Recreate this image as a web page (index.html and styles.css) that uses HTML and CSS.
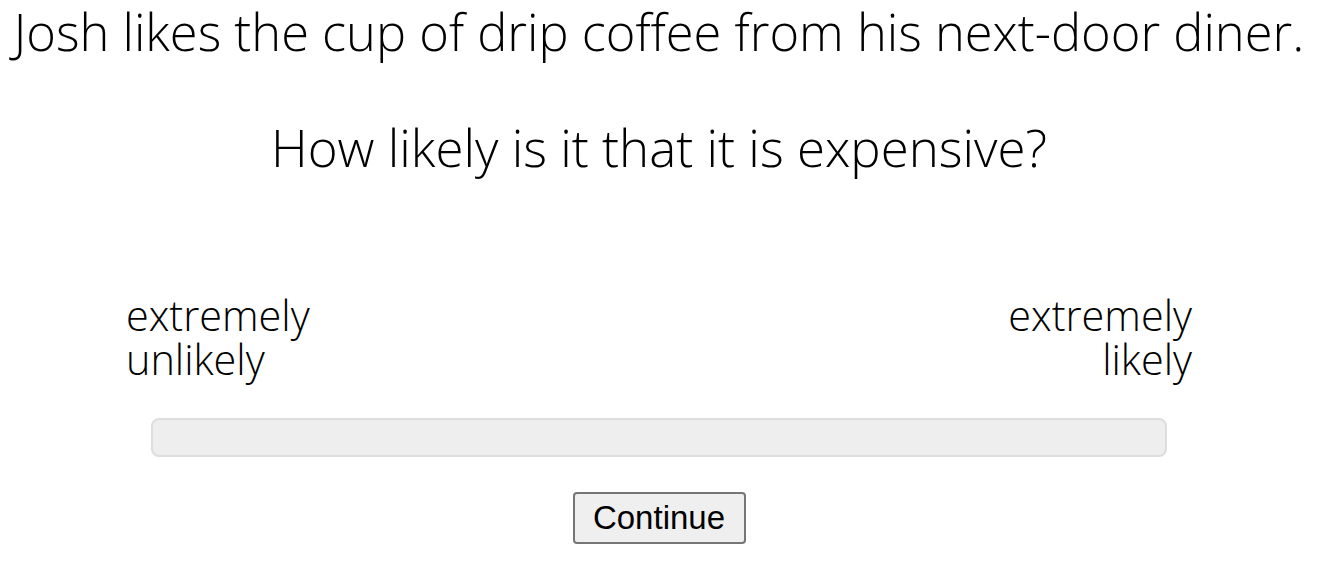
FILE: index.html
```html
<!DOCTYPE html>
<html>
<head>
<meta charset="utf-8">
<link rel="stylesheet" href="styles.css">
</head>
<body>
<div class="page">
  <p class="prompt">Josh likes the cup of drip coffee from his next-door diner.</p>
  <p class="question">How likely is it that it is expensive?</p>
  <div class="scale">
    <div class="labels">
      <div class="label left">extremely<br>unlikely</div>
      <div class="label right">extremely<br>likely</div>
    </div>
    <div class="track"></div>
  </div>
  <div class="actions">
    <button class="btn" type="button">Continue</button>
  </div>
</div>
</body>
</html>
```

FILE: styles.css
```css
html, body {
  margin: 0;
  padding: 0;
  background: #ffffff;
}
.page {
  width: 1318px;
  font-family: "Open Sans", "DejaVu Sans", sans-serif;
  font-weight: 300;
  color: #000;
  display: flex;
  flex-direction: column;
  align-items: center;
}
.prompt {
  margin: 2px 0 0 0;
  font-size: 50.6px;
  line-height: 60px;
  white-space: nowrap;
}
.question {
  margin: 55px 0 0 0;
  font-size: 51px;
  line-height: 60px;
}
.scale {
  margin-top: 116px;
  width: 1066px;
  display: flex;
  flex-direction: column;
  align-items: center;
}
.labels {
  width: 100%;
  display: flex;
  justify-content: space-between;
}
.label {
  font-size: 41.4px;
  line-height: 44px;
}
.label.right {
  text-align: right;
}
.track {
  margin-top: 37px;
  width: 1012px;
  height: 35px;
  background: #eeeeee;
  border: 2px solid #dddddd;
  border-radius: 8px;
}
.actions {
  margin-top: 35px;
}
.btn {
  width: 173px;
  height: 52px;
  font-family: "Liberation Sans", Arial, sans-serif;
  font-size: 33px;
  color: #000;
  background: #efefef;
  border: 2px solid #767676;
  border-radius: 4px;
  padding: 0;
}
```
